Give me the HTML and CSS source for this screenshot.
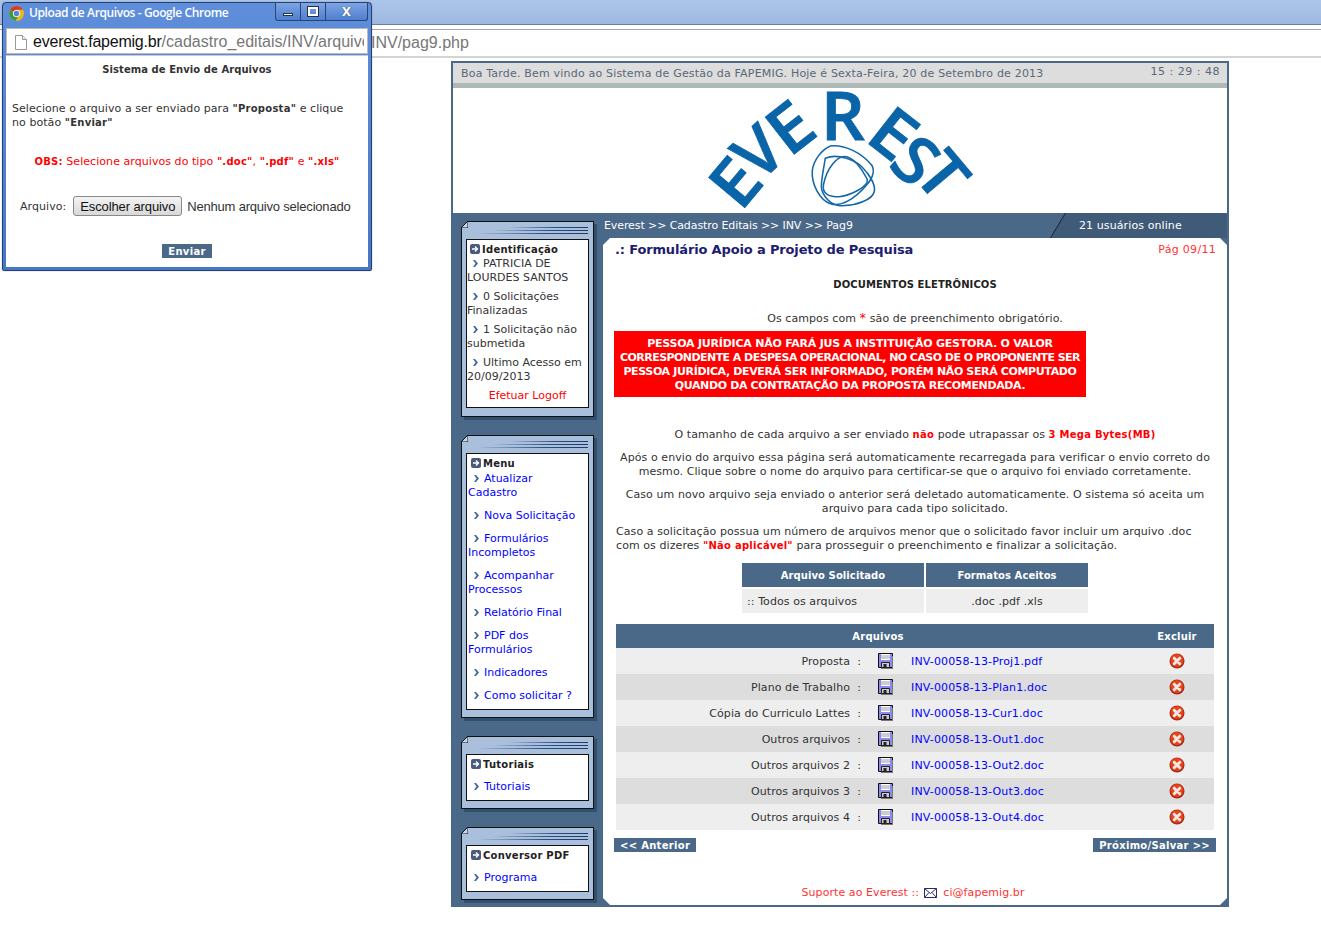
FILE: index.html
```html
<!DOCTYPE html>
<html lang="pt-BR">
<head>
    <meta charset="UTF-8">
    <title>Everest - FAPEMIG</title>
    <link rel="stylesheet" href="styles.css">
</head>
<body>
    <svg class="defs" width="0" height="0">
        <symbol id="go" viewBox="0 0 10 10">
            <rect width="10" height="10" rx="2" fill="#4a5a7c"/>
            <path d="M2 5h5M5 2.500L7.500 5 5 7.500" fill="none" stroke="#fff" stroke-width="1.300"/>
        </symbol>
        <symbol id="chev" viewBox="0 0 5 7">
            <path d="M0 0h2l3 3.500-3 3.500H0l2.500-3.500z" fill="#3f6c96"/>
        </symbol>
        <symbol id="floppy" viewBox="0 0 16 16">
            <path d="M0.500 0.500h14v14h-14z" fill="#8a8af0" stroke="#111"/>
            <path d="M15 3v13H3v-1h11V3z" fill="#777"/>
            <path d="M3 1h9v6H3z" fill="#fff"/>
            <path d="M3 3h9M3 5h9" stroke="#99a" stroke-width="1"/>
            <path d="M3.500 9.500h8v5h-8z" fill="#ccc" stroke="#222"/>
            <path d="M5.500 11h3v3h-3z" fill="#223"/>
        </symbol>
        <symbol id="del" viewBox="0 0 16 16">
            <circle cx="8" cy="8" r="7.500" fill="#a82a12"/>
            <circle cx="8" cy="7.500" r="6.500" fill="#e8411c"/>
            <path d="M5.200 5.200l5.600 5.600M10.800 5.200l-5.600 5.600" stroke="#f6e8e0" stroke-width="3" stroke-linecap="round"/>
        </symbol>
    </svg>

    <div class="chrome">
        <div class="chrome-title"></div>
        <div class="chrome-url">INV/pag9.php</div>
    </div>

    <div class="site">
        <div class="topbar">
            <span class="welcome">Boa Tarde. Bem vindo ao Sistema de Gestão da FAPEMIG. Hoje é Sexta-Feira, 20 de Setembro de 2013</span>
            <span class="clock">15 : 29 : 48</span>
        </div>
        <div class="logo-area">
            <svg class="logo" width="280" height="125" viewBox="700 88 280 125">
                <g class="logo-letters">
                    <text transform="translate(735 182) rotate(-50) scale(1.08 1)" y="24">E</text>
                    <text transform="translate(758 152) rotate(-42)" y="24">V</text>
                    <text transform="translate(790 127) rotate(-38) scale(1.08 1)" y="24">E</text>
                    <text transform="translate(843 116) scale(1.05 1.02)" y="24">R</text>
                    <text transform="translate(894 133) rotate(38) scale(1.08 1)" y="24">E</text>
                    <text transform="translate(916 160) rotate(42)" y="24">S</text>
                    <text transform="translate(943 175) rotate(50) scale(1.05 1)" y="24">T</text>
                </g>
                <g transform="translate(809.500 139) scale(.35)" fill="none" stroke="#1468a8" stroke-width="4.500">
                    <path d="M60 20C100 15 150 40 178 75C190 95 175 120 160 135C130 170 90 195 60 185C30 175 5 130 8 90C12 60 35 30 60 20Z"/>
                    <path d="M100 50C80 50 50 80 40 130C35 160 60 165 85 165C120 160 170 135 165 115C150 85 125 50 100 50Z"/>
                    <path d="M45 55C40 90 30 130 35 145C45 175 70 195 100 190C130 190 180 175 185 150C190 130 170 100 150 80C130 60 80 40 45 55Z"/>
                </g>
            </svg>
        </div>

        <div class="main">
            <div class="sidebar">
                <div class="box box-id">
                    <svg class="fold" width="7" height="7"><path d="M0 0h7L0 7z" fill="#4a6888"/><path d="M7 0v7H0z" fill="#c8d6e8"/><path d="M7 0L0 7M7 0v7H0" fill="none" stroke="#111"/></svg>
                    <div class="box-lines"><i class="l1"></i><i class="l2"></i><i class="l3"></i></div>
                    <div class="box-inner">
                        <div class="box-title"><svg class="ico-go"><use href="#go"/></svg>Identificação</div>
                        <div class="item"><svg class="ico-chev"><use href="#chev"/></svg>PATRICIA DE LOURDES SANTOS</div>
                        <div class="item"><svg class="ico-chev"><use href="#chev"/></svg>0 Solicitações Finalizadas</div>
                        <div class="item"><svg class="ico-chev"><use href="#chev"/></svg>1 Solicitação não submetida</div>
                        <div class="item"><svg class="ico-chev"><use href="#chev"/></svg>Ultimo Acesso em 20/09/2013</div>
                        <div class="logoff">Efetuar Logoff</div>
                    </div>
                </div>

                <div class="box box-menu">
                    <svg class="fold" width="7" height="7"><path d="M0 0h7L0 7z" fill="#4a6888"/><path d="M7 0v7H0z" fill="#c8d6e8"/><path d="M7 0L0 7M7 0v7H0" fill="none" stroke="#111"/></svg>
                    <div class="box-lines"><i class="l1"></i><i class="l2"></i><i class="l3"></i></div>
                    <div class="box-inner">
                        <div class="box-title"><svg class="ico-go"><use href="#go"/></svg>Menu</div>
                        <div class="item"><svg class="ico-chev"><use href="#chev"/></svg><a href="#">Atualizar<br>Cadastro</a></div>
                        <div class="item"><svg class="ico-chev"><use href="#chev"/></svg><a href="#">Nova Solicitação</a></div>
                        <div class="item"><svg class="ico-chev"><use href="#chev"/></svg><a href="#">Formulários Incompletos</a></div>
                        <div class="item"><svg class="ico-chev"><use href="#chev"/></svg><a href="#">Acompanhar Processos</a></div>
                        <div class="item"><svg class="ico-chev"><use href="#chev"/></svg><a href="#">Relatório Final</a></div>
                        <div class="item"><svg class="ico-chev"><use href="#chev"/></svg><a href="#">PDF dos Formulários</a></div>
                        <div class="item"><svg class="ico-chev"><use href="#chev"/></svg><a href="#">Indicadores</a></div>
                        <div class="item"><svg class="ico-chev"><use href="#chev"/></svg><a href="#">Como solicitar ?</a></div>
                    </div>
                </div>

                <div class="box box-short">
                    <svg class="fold" width="7" height="7"><path d="M0 0h7L0 7z" fill="#4a6888"/><path d="M7 0v7H0z" fill="#c8d6e8"/><path d="M7 0L0 7M7 0v7H0" fill="none" stroke="#111"/></svg>
                    <div class="box-lines"><i class="l1"></i><i class="l2"></i><i class="l3"></i></div>
                    <div class="box-inner">
                        <div class="box-title"><svg class="ico-go"><use href="#go"/></svg>Tutoriais</div>
                        <div class="item"><svg class="ico-chev"><use href="#chev"/></svg><a href="#">Tutoriais</a></div>
                    </div>
                </div>

                <div class="box box-short">
                    <svg class="fold" width="7" height="7"><path d="M0 0h7L0 7z" fill="#4a6888"/><path d="M7 0v7H0z" fill="#c8d6e8"/><path d="M7 0L0 7M7 0v7H0" fill="none" stroke="#111"/></svg>
                    <div class="box-lines"><i class="l1"></i><i class="l2"></i><i class="l3"></i></div>
                    <div class="box-inner">
                        <div class="box-title"><svg class="ico-go"><use href="#go"/></svg>Conversor PDF</div>
                        <div class="item"><svg class="ico-chev"><use href="#chev"/></svg><a href="#">Programa</a></div>
                    </div>
                </div>
            </div>

            <div class="right">
                <div class="nav">
                    <div class="crumbs">Everest &gt;&gt; Cadastro Editais &gt;&gt; INV &gt;&gt; Pag9</div>
                    <svg class="nav-cut" width="16" height="25"><path d="M16 0v25H1z" fill="#3f5b78"/><path d="M15.500 0L.5 25" stroke="#16222e"/></svg>
                    <div class="online">21 usuários online</div>
                </div>
                <div class="content">
                    <div class="form-head">
                        <span class="form-title">.: Formulário Apoio a Projeto de Pesquisa</span>
                        <span class="page-no">Pág 09/11</span>
                    </div>
                    <div class="docs-title">DOCUMENTOS ELETRÔNICOS</div>
                    <p class="note">Os campos com <span class="star">*</span> são de preenchimento obrigatório.</p>
                    <div class="alert"><span class="alert-loose">PESSOA JURÍDICA NÃO FARÁ JUS A INSTITUIÇÃO GESTORA. O VALOR</span><br><span class="alert-tight">CORRESPONDENTE A DESPESA OPERACIONAL, NO CASO DE O PROPONENTE SER</span><br>PESSOA JURÍDICA, DEVERÁ SER INFORMADO, PORÉM NÃO SERÁ COMPUTADO<br>QUANDO DA CONTRATAÇÃO DA PROPOSTA RECOMENDADA.</div>
                    <p class="note note-size">O tamanho de cada arquivo a ser enviado <b class="red">não</b> pode utrapassar os <b class="red">3 Mega Bytes(MB)</b></p>
                    <p class="para">Após o envio do arquivo essa página será automaticamente recarregada para verificar o envio correto do mesmo. Clique sobre o nome do arquivo para certificar-se que o arquivo foi enviado corretamente.</p>
                    <p class="para">Caso um novo arquivo seja enviado o anterior será deletado automaticamente. O sistema só aceita um arquivo para cada tipo solicitado.</p>
                    <p class="para para-left">Caso a solicitação possua um número de arquivos menor que o solicitado favor incluir um arquivo .doc<br>com os dizeres <b class="red">"Não aplicável"</b> para prosseguir o preenchimento e finalizar a solicitação.</p>

                    <table class="formats">
                        <tr><th class="col-a">Arquivo Solicitado</th><th class="col-b">Formatos Aceitos</th></tr>
                        <tr><td class="left">:: Todos os arquivos</td><td>.doc .pdf .xls</td></tr>
                    </table>

                    <table class="files">
                        <colgroup><col class="c-label"><col class="c-ico"><col><col class="c-del"></colgroup>
                        <tr><th colspan="3">Arquivos</th><th>Excluir</th></tr>
                        <tr><td class="f-label">Proposta&nbsp; :</td><td class="f-ico"><svg class="ico-16"><use href="#floppy"/></svg></td><td class="f-link"><a href="#">INV-00058-13-Proj1.pdf</a></td><td class="f-del"><svg class="ico-16"><use href="#del"/></svg></td></tr>
                        <tr><td class="f-label">Plano de Trabalho&nbsp; :</td><td class="f-ico"><svg class="ico-16"><use href="#floppy"/></svg></td><td class="f-link"><a href="#">INV-00058-13-Plan1.doc</a></td><td class="f-del"><svg class="ico-16"><use href="#del"/></svg></td></tr>
                        <tr><td class="f-label">Cópia do Curriculo Lattes&nbsp; :</td><td class="f-ico"><svg class="ico-16"><use href="#floppy"/></svg></td><td class="f-link"><a href="#">INV-00058-13-Cur1.doc</a></td><td class="f-del"><svg class="ico-16"><use href="#del"/></svg></td></tr>
                        <tr><td class="f-label">Outros arquivos&nbsp; :</td><td class="f-ico"><svg class="ico-16"><use href="#floppy"/></svg></td><td class="f-link"><a href="#">INV-00058-13-Out1.doc</a></td><td class="f-del"><svg class="ico-16"><use href="#del"/></svg></td></tr>
                        <tr><td class="f-label">Outros arquivos 2&nbsp; :</td><td class="f-ico"><svg class="ico-16"><use href="#floppy"/></svg></td><td class="f-link"><a href="#">INV-00058-13-Out2.doc</a></td><td class="f-del"><svg class="ico-16"><use href="#del"/></svg></td></tr>
                        <tr><td class="f-label">Outros arquivos 3&nbsp; :</td><td class="f-ico"><svg class="ico-16"><use href="#floppy"/></svg></td><td class="f-link"><a href="#">INV-00058-13-Out3.doc</a></td><td class="f-del"><svg class="ico-16"><use href="#del"/></svg></td></tr>
                        <tr><td class="f-label">Outros arquivos 4&nbsp; :</td><td class="f-ico"><svg class="ico-16"><use href="#floppy"/></svg></td><td class="f-link"><a href="#">INV-00058-13-Out4.doc</a></td><td class="f-del"><svg class="ico-16"><use href="#del"/></svg></td></tr>
                    </table>

                    <div class="pager">
                        <span class="btn">&lt;&lt; Anterior</span>
                        <span class="btn">Próximo/Salvar &gt;&gt;</span>
                    </div>

                    <div class="support">Suporte ao Everest :: <svg class="mail" width="13" height="10"><path d="M.5.500h12v9H.5z" fill="#fff" stroke="#2a2a70"/><path d="M.5.500l6 5 6-5M.5 9.500l4.500-5M12.500 9.500L8 4.500" fill="none" stroke="#2a2a70"/></svg> ci@fapemig.br</div>
                </div>
            </div>
        </div>
    </div>

    <!-- popup window -->
    <div class="popup">
        <div class="popup-title">
            <svg class="chrome-logo" width="15" height="15" viewBox="0 0 16 16">
                <circle cx="8" cy="8" r="8" fill="#e8b820"/>
                <path d="M8 8L1.100 4A8 8 0 0 1 14.900 4H8z" fill="#d8392b"/>
                <path d="M8 8L1.100 4A8 8 0 0 0 7 15.900L11.500 8z" fill="#3f9c44"/>
                <circle cx="8" cy="8" r="3.800" fill="#fff"/>
                <circle cx="8" cy="8" r="2.900" fill="#4a86d8"/>
            </svg>
            <span class="popup-name">Upload de Arquivos - Google Chrome</span>
            <div class="win-btns">
                <span class="win-btn win-min"><i></i></span>
                <span class="win-btn win-max"><i></i></span>
                <span class="win-btn win-close">X</span>
            </div>
        </div>
        <div class="popup-url">
            <svg class="page-ico" width="12" height="15" viewBox="0 0 12 15"><path d="M.5.500h7l4 4v10H.5z" fill="#fff" stroke="#999"/><path d="M7.500.500v4h4" fill="#eee" stroke="#999"/></svg>
            <span class="url-text"><b>everest.fapemig.br</b>/cadastro_editais/INV/arquivo</span>
        </div>
        <div class="popup-body">
            <div class="popup-head">Sistema de Envio de Arquivos</div>
            <p class="popup-msg">Selecione o arquivo a ser enviado para <b>"Proposta"</b> e clique<br>no botão <b>"Enviar"</b></p>
            <p class="popup-obs"><b>OBS:</b> Selecione arquivos do tipo <b>".doc"</b>, <b>".pdf"</b> e <b>".xls"</b></p>
            <div class="popup-file">
                <span class="file-label">Arquivo:</span>
                <button class="file-btn" type="button">Escolher arquivo</button>
                <span class="file-name">Nenhum arquivo selecionado</span>
            </div>
            <div class="popup-send"><span class="btn">Enviar</span></div>
        </div>
    </div>
</body>
</html>
```

FILE: styles.css
```css
body {
    margin: 0;
    background: #fff;
    font-family: "DejaVu Sans", Verdana, sans-serif;
    font-size: 11px;
    line-height: 14px;
    color: #333;
}
p {
    margin: 0;
}
b {
    font-size: 10px;
    letter-spacing: .25px;
}
a {
    color: #00f;
    text-decoration: none;
}
.defs {
    position: absolute;
}
.red {
    color: #f00;
}

/* browser behind the popup */
.chrome-title {
    height: 24px;
    background: linear-gradient(#abc5ea, #9eb8e1);
    border-bottom: 1px solid #6a81a5;
}
.chrome-url {
    height: 26px;
    margin-top: 4px;
    padding-left: 371px;
    border-top: 1px solid #aaa;
    border-bottom: 2px solid #d4d4d4;
    font-family: "Liberation Sans", Arial, sans-serif;
    font-size: 16px;
    line-height: 26px;
    color: #777;
}

/* site frame */
.site {
    width: 774px;
    margin: 3px 0 0 451px;
    border: 2px solid #4a6888;
    border-bottom: 0;
}
.topbar {
    display: flex;
    justify-content: space-between;
    height: 20px;
    padding: 0 7px 0 8px;
    background: #ddd;
    border-bottom: 5px solid #aeb8b6;
    color: #5a6878;
}
.welcome {
    line-height: 22px;
    letter-spacing: .19px;
}
.clock {
    line-height: 18px;
    letter-spacing: .5px;
}
.logo-area {
    height: 125px;
    display: flex;
    justify-content: center;
}
.logo-letters {
    font-family: "Open Sans", sans-serif;
    font-weight: 600;
    font-size: 66px;
    fill: #0a64a8;
    stroke: #0a64a8;
    stroke-width: .8px;
    text-anchor: middle;
}

.main {
    display: flex;
    background: #4a6888;
}
.sidebar {
    width: 150px;
    padding: 8px 0 6px 8px;
    box-sizing: border-box;
    display: flex;
    flex-direction: column;
    gap: 18px;
}

/* side boxes */
.box {
    position: relative;
    width: 131px;
    background: #a9bfdc;
    border: 1px solid #111;
    padding-bottom: 8px;
    box-shadow: 3px 3px 0 #31506f;
}
.fold {
    position: absolute;
    left: -1px;
    top: -1px;
}
.box-lines {
    height: 17px;
    box-sizing: border-box;
    padding: 5px 5px 0 0;
    display: flex;
    flex-direction: column;
    align-items: flex-end;
    gap: 2px;
}
.box-lines i {
    display: block;
    height: 1px;
    background: linear-gradient(to right, #a9bfdc, #2a4f80 60%, #1d3a66);
}
.l1 {
    width: 80px;
}
.l2 {
    width: 96px;
}
.l3 {
    width: 111px;
}
.box-inner {
    margin: 0 4px;
    padding: 3px 0 4px;
    background: #fff;
    border: 1px solid #111;
}
.box-title {
    padding-left: 3px;
    font-size: 10px;
    font-weight: bold;
    letter-spacing: .25px;
    color: #222;
}
.ico-go {
    width: 10px;
    height: 10px;
    margin-right: 2px;
    vertical-align: -1px;
}
.ico-chev {
    width: 5px;
    height: 7px;
    margin: 0 5px 0 6px;
}
.item {
    margin-bottom: 5px;
}
.logoff {
    text-align: center;
    color: #f00;
}
.box-menu {
    padding-bottom: 7px;
}
.box-menu .box-inner {
    padding: 3px 1px 6px;
}
.box-menu .box-title {
    margin-bottom: 1px;
}
.box-menu .item {
    margin-bottom: 9px;
}
.box-menu .item:last-child {
    margin-bottom: 0;
}
.box-short {
    padding-bottom: 7px;
}
.box-short .box-inner {
    padding: 3px 1px 1px;
}
.box-short .box-title {
    margin-bottom: 8px;
}
.box-short .item {
    margin-bottom: 5px;
}

/* right column */
.right {
    width: 624px;
}
.nav {
    display: flex;
    height: 25px;
    line-height: 25px;
    color: #fff;
}
.crumbs {
    flex: 1;
    padding-left: 1px;
    letter-spacing: -.1px;
}
.nav-cut {
    display: block;
}
.online {
    width: 161px;
    padding-left: 13px;
    box-sizing: border-box;
    background: #3f5b78;
    letter-spacing: .1px;
}
.content {
    height: 667px;
    padding: 3px 0 0;
    box-sizing: border-box;
    background: #fff;
    margin-bottom: 2px;
    letter-spacing: .08px;
    clip-path: polygon(7px 0, calc(100% - 7px) 0, 100% 7px, 100% calc(100% - 7px), calc(100% - 7px) 100%, 7px 100%, 0 calc(100% - 7px), 0 7px);
}
.form-head {
    display: flex;
    justify-content: space-between;
    align-items: center;
    height: 16px;
    padding: 1px 11px 0 12px;
}
.form-title {
    font-size: 13px;
    font-weight: bold;
    letter-spacing: -.15px;
    color: #1c1c70;
}
.page-no {
    color: #f33;
    letter-spacing: .3px;
}
.docs-title {
    margin-top: 20px;
    text-align: center;
    font-size: 10px;
    font-weight: bold;
    color: #222;
}
.note {
    margin-top: 19px;
    text-align: center;
}
.star {
    color: #f00;
    font-size: 13px;
}
.alert {
    width: 464px;
    margin: 5px 0 0 11px;
    padding: 6px 4px 4px;
    background: #f00;
    color: #fff;
    font-weight: bold;
    letter-spacing: -.36px;
    text-align: center;
    white-space: nowrap;
}
.alert-loose {
    letter-spacing: -.22px;
}
.alert-tight {
    letter-spacing: -.55px;
}
.note-size {
    margin-top: 31px;
}
.para {
    margin: 9px 13px 0;
    text-align: center;
}
.para-left {
    text-align: left;
}

/* tables */
.formats {
    margin: 8px auto 0;
    border-spacing: 2px;
    border-collapse: separate;
}
.formats th {
    height: 24px;
    padding: 1px 0 0;
    box-sizing: border-box;
    background: #4a6888;
    color: #fff;
    font-size: 10px;
    font-weight: bold;
}
.formats td {
    height: 24px;
    padding: 1px 0 0;
    box-sizing: border-box;
    background: #eee;
    text-align: center;
}
.formats .left {
    text-align: left;
    padding-left: 5px;
}
.col-a {
    width: 182px;
}
.col-b {
    width: 162px;
}
.files {
    width: 598px;
    margin: 9px 0 0 13px;
    border-collapse: collapse;
    table-layout: fixed;
}
.c-label {
    width: 248px;
}
.c-ico {
    width: 44px;
}
.c-del {
    width: 74px;
}
.files th {
    height: 24px;
    padding: 1px 0 0;
    box-sizing: border-box;
    background: #4a6888;
    color: #fff;
    font-size: 10px;
    font-weight: bold;
    letter-spacing: .2px;
}
.files td {
    height: 26px;
    padding: 0;
    box-sizing: border-box;
    background: #eee;
}
.files tr:nth-child(odd) td {
    background: #ddd;
}
.files .f-label {
    padding: 1px 3px 0 0;
    text-align: right;
}
.f-ico {
    text-align: center;
}
.files .f-link {
    padding: 1px 0 0 3px;
    letter-spacing: .15px;
}
.f-del {
    text-align: center;
}
.ico-16 {
    display: inline-block;
    width: 16px;
    height: 16px;
    vertical-align: middle;
}
.pager {
    display: flex;
    justify-content: space-between;
    margin: 8px 11px 0 11px;
}
.btn {
    display: inline-block;
    height: 14px;
    padding: 1px 6px 0;
    box-sizing: border-box;
    background: #4a6888;
    color: #fff;
    font-size: 10px;
    font-weight: bold;
    letter-spacing: .3px;
    line-height: 14px;
}
.support {
    margin-top: 34px;
    text-align: center;
    color: #f33;
    margin-right: 4px;
}
.mail {
    vertical-align: -2px;
    margin: 0 3px 0 1px;
}

/* popup */
.popup {
    position: absolute;
    left: 2px;
    top: 2px;
    width: 370px;
    height: 269px;
    box-sizing: border-box;
    border: 1px solid #26436e;
    border-radius: 4px 4px 2px 2px;
    background: linear-gradient(#5f8edb, #4676c8);
    padding: 0 3px 3px;
    box-shadow: 0 0 1px #555;
    display: flex;
    flex-direction: column;
}
.popup-title {
    display: flex;
    align-items: flex-start;
    height: 24px;
    color: #fff;
}
.chrome-logo {
    margin: 3px 5px 0 3px;
}
.popup-name {
    font-family: "Open Sans", sans-serif;
    font-size: 12px;
    font-weight: 600;
    line-height: 20px;
    letter-spacing: -.4px;
}
.win-btns {
    display: flex;
    margin-left: auto;
    height: 17px;
    border: 1px solid #2a4570;
    border-top: 0;
    border-radius: 0 0 3px 3px;
    background: linear-gradient(#7da4e4, #4f7fd0);
}
.win-btn {
    display: flex;
    align-items: center;
    justify-content: center;
    width: 24px;
    border-right: 1px solid #2a4570;
}
.win-close {
    width: 41px;
    border-right: 0;
    color: #fff;
    font-weight: bold;
    font-size: 12px;
    text-shadow: 0 0 1px #123;
}
.win-min i {
    display: block;
    width: 10px;
    height: 3px;
    margin-top: 6px;
    background: #fff;
    border: 1px solid #234;
    box-sizing: border-box;
}
.win-max i {
    display: block;
    width: 10px;
    height: 9px;
    border: 2px solid #fff;
    outline: 1px solid #234;
    box-sizing: border-box;
}
.popup-url {
    display: flex;
    align-items: center;
    height: 26px;
    margin: 1px 0;
    padding: 2px 0 0 8px;
    background: #fff;
    border: 1px solid #bbb;
    box-sizing: border-box;
    white-space: nowrap;
    font-family: "Liberation Sans", Arial, sans-serif;
    font-size: 16px;
    line-height: 20px;
    color: #777;
}
.url-text {
    flex: 1;
    min-width: 0;
    margin-right: 3px;
    overflow: hidden;
}
.url-text b {
    font-size: 16px;
    font-weight: normal;
    letter-spacing: -.22px;
    color: #111;
}
.page-ico {
    margin-right: 6px;
    flex: none;
}
.popup-body {
    flex: 1;
    background: #fff;
    border-top: 1px solid #ccc;
    padding: 7px 6px 0;
    letter-spacing: .06px;
}
.popup-head {
    text-align: center;
    font-size: 10px;
    font-weight: bold;
}
.popup-msg {
    margin-top: 25px;
}
.popup-obs {
    margin-top: 25px;
    text-align: center;
    color: #f00;
}
.popup-file {
    display: flex;
    align-items: center;
    margin: 26px 0 0 8px;
    height: 22px;
    white-space: nowrap;
}
.file-label {
    margin-right: 7px;
    padding-top: 2px;
}
.file-btn {
    flex: none;
    height: 20px;
    width: 109px;
    padding: 0;
    background: linear-gradient(#f4f4f4, #d8d8d8);
    border: 1px solid #888;
    border-radius: 3px;
    font-family: "Liberation Sans", Arial, sans-serif;
    font-size: 13px;
    letter-spacing: -.1px;
    color: #111;
}
.file-name {
    margin-left: 5px;
    padding-top: 1px;
    font-family: "Liberation Sans", Arial, sans-serif;
    font-size: 13px;
    letter-spacing: -.2px;
    color: #333;
}
.popup-send {
    margin-top: 27px;
    text-align: center;
}
```
